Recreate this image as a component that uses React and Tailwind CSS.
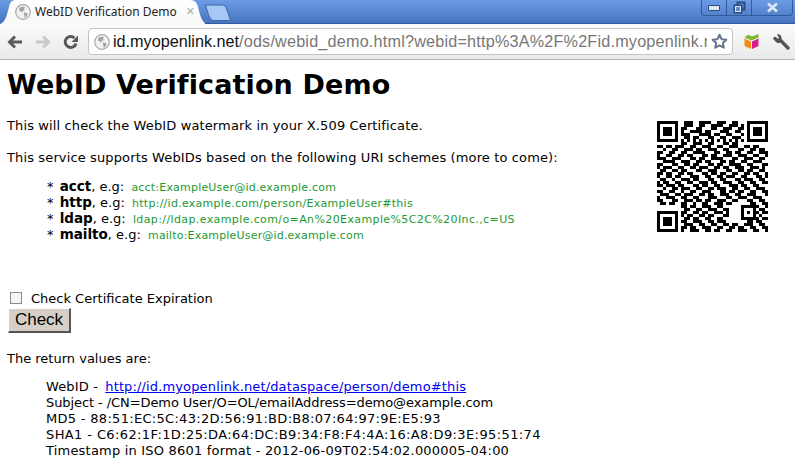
const QR = [
"0000000001110011110011100110001000000",
"0000000001110011001111001110110000000",
"0000000111000110001100111001100000000",
"0000000110011110110001110011000000000",
"0000000111100011110110011000110000000",
"0000000001101100011001100111010000000",
"0000000010101010101010101010100000000",
"0000000011001110011000110110000000000",
"1101101110011001110011001110011011000",
"0010011001110110011100110001100110110",
"1100110011001111000110011011001100111",
"1001100110110001101100111001110011001",
"1110011100011011001111000110011100110",
"0011110011100110110001101100110011100",
"1100011001101100011011001111001100011",
"1011100110011011100110110011100111010",
"0110011011000110011100011001101100110",
"1101100110110001101101100110011011001",
"1001101100011100110011011100110001101",
"0110010011101100011001100011011100110",
"1011001100110011101100111001100110011",
"1101110110001101100110001110110011000",
"0010011011100110011011100110011001110",
"1100110010011001110001101101100110011",
"0111001101110011011001110011001110001",
"1001110011001100011100011001110011100",
"1100011001110110110011100110001100110",
"0110110011001001100111011000000110011",
"0000000011011001110011000000000011001",
"0000000001100110011100110000000100110",
"0000000011001101100111010000000011011",
"0000000010110011011000110000000100100",
"0000000001101100110011000000000011011",
"0000000011001110011011100000001101100",
"0000000001110011001100110110011100110",
"0000000011011001110011001101100110011",
"0000000010011100110110011001110011001",
];
function qrCells() {
  const g = QR.map((r) => r.padEnd(37, "0").split("").map(Number));
  const finder = (x, y) => {
    for (let i = -1; i < 8; i++) for (let j = -1; j < 8; j++) {
      const cx = x + j, cy = y + i;
      if (cx < 0 || cy < 0 || cx > 36 || cy > 36) continue;
      const edge = i === 0 || i === 6 || j === 0 || j === 6;
      const core = i >= 2 && i <= 4 && j >= 2 && j <= 4;
      const inside = i >= 0 && i <= 6 && j >= 0 && j <= 6;
      g[cy][cx] = inside && (edge || core) ? 1 : 0;
    }
  };
  finder(0, 0); finder(30, 0); finder(0, 30);
  for (let i = -2; i <= 2; i++) for (let j = -2; j <= 2; j++) {
    g[30 + i][30 + j] = Math.max(Math.abs(i), Math.abs(j)) !== 1 ? 1 : 0;
  }
  return g;
}
function QrCode() {
  const g = qrCells();
  let d = "";
  g.forEach((r, y) => r.forEach((v, x) => { if (v) d += `M${x} ${y}h1v1h-1z`; }));
  return (
    <svg width="111" height="111" viewBox="0 0 37 37" shapeRendering="crispEdges" className="block">
      <path d={d} fill="#000" />
    </svg>
  );
}
function Globe({ size = 16 }) {
  return (
    <svg width={size} height={size} viewBox="0 0 16 16" className="shrink-0">
      <circle cx="8" cy="8" r="7.3" fill="#f2f2f2" stroke="#a8a8a8" strokeWidth="1.2" />
      <path d="M4.5 3.5 8 2.6l2 1-1 1.4.8 1.2-2 .6-.6 1.7-1.7-1.2L4 6.3zM8.8 8.6l3 .4.9 1.5-1.6 2.6-1.4.6-.4-2.4z" fill="#a4a4a4" />
    </svg>
  );
}
const items = [
  ["acct", "acct:ExampleUser@id.example.com", "tracking-[0.2px]"],
  ["http", "http://id.example.com/person/ExampleUser#this", "tracking-[0.27px]"],
  ["ldap", "ldap://ldap.example.com/o=An%20Example%5C2C%20Inc.,c=US", "tracking-[0.39px]"],
  ["mailto", "mailto:ExampleUser@id.example.com", "tracking-[0.18px]"],
];
export default function App() {
  return (
    <div className="relative w-[795px] h-[470px] overflow-hidden bg-white text-black font-['DejaVu_Sans',sans-serif]">
      {/* title bar */}
      <div className="h-6 flex items-start bg-gradient-to-b from-[#6c9ce4] to-[#4773c0] border-b border-[#2f5a9c]">
        <div className="relative w-[205px] h-6 shrink-0">
          <svg width="205" height="24" viewBox="0 0 205 24" className="absolute left-0 top-0">
            <defs>
              <linearGradient id="tabg" x1="0" y1="0" x2="0" y2="1">
                <stop offset="0" stopColor="#ffffff" />
                <stop offset="1" stopColor="#f8f8f8" />
              </linearGradient>
            </defs>
            <path d="M0 24C6 22 7 14 9 7 10 2 12 0 16 0H190C195 0 197 3 198 7 200 14 201 22 207 24Z" fill="url(#tabg)" />
          </svg>
          <div className="relative flex items-center h-6 pl-[15px]">
            <Globe size={16} />
            <span className="ml-[4px] text-[12px] leading-6 font-['Noto_Sans',sans-serif] text-[#222] whitespace-nowrap">WebID Verification Demo</span>
            <span className="ml-[9px] text-[11px] text-[#aaa] leading-6">✕</span>
          </div>
        </div>
        <svg width="28" height="20" viewBox="0 0 28 20" className="shrink-0 mt-[4px]">
          <path d="M1 1H17C20 1 21 3 22 6L25 15C25.5 16 24 16.5 23 16.5H9C6 16.5 5 14 4 12L1 3Z" fill="#a5c8f4" stroke="#3e67a8" />
        </svg>
        <div className="ml-auto mr-[2px] flex w-[92px] h-[16px] rounded-b-[4px] border border-t-0 border-[#2f5a9c]">
          <div className="w-[25px] flex items-center justify-center border-r border-[#2f5a9c]">
            <div className="w-[12px] h-[6px] rounded-[1px] bg-[#dfe7f5] border border-[#2b4a80]" />
          </div>
          <div className="w-[25px] flex items-center justify-center border-r border-[#2f5a9c]">
            <svg width="13" height="13" viewBox="0 0 13 13">
              <rect x="4.5" y="1.5" width="7" height="7" fill="none" stroke="#2b4a80" strokeWidth="2" />
              <rect x="1.5" y="4.5" width="7" height="7" fill="#5f8ad6" stroke="#2b4a80" strokeWidth="2" />
              <rect x="2.5" y="5.5" width="5" height="5" fill="none" stroke="#dfe7f5" />
            </svg>
          </div>
          <div className="flex-1 flex items-center justify-center">
            <svg width="13" height="11" viewBox="0 0 13 11">
              <path d="M2 1.5 11 9.5M11 1.5 2 9.5" stroke="#dfe7f5" strokeWidth="2.6" />
            </svg>
          </div>
        </div>
      </div>
      {/* toolbar */}
      <div className="h-[36px] flex items-center bg-gradient-to-b from-[#fbfbfb] to-[#e9e9e9] border-b border-[#b4b4b4]">
        <svg width="16" height="14" viewBox="0 0 16 14" className="ml-[7px] shrink-0">
          <path d="M8 1.5 2.5 7 8 12.5M3 7H15" fill="none" stroke="#5a5a5a" strokeWidth="3" />
        </svg>
        <svg width="16" height="14" viewBox="0 0 16 14" className="ml-[12px] shrink-0">
          <path d="M8 1.5 13.5 7 8 12.5M13 7H1" fill="none" stroke="#c9c9c9" strokeWidth="3" />
        </svg>
        <svg width="16" height="16" viewBox="0 0 16 16" className="ml-[12px] shrink-0">
          <path d="M13 9.5A5.5 5.5 0 1 1 11.5 4" fill="none" stroke="#585858" strokeWidth="3" />
          <path d="M15 1.5V8H8.5Z" fill="#585858" />
        </svg>
        <div className="ml-[9px] w-[645px] shrink-0 h-[27px] flex items-center bg-white border border-[#c4c4c4] rounded-[4px] pl-[5px] pr-[4px]">
          <Globe size={16} />
          <div className="ml-[3px] w-[594px] overflow-hidden whitespace-nowrap text-[16.2px] leading-[25px] font-['Liberation_Sans',sans-serif]">
            <span className="text-[#111]">id.myopenlink.net</span>
            <span className="text-[#777] tracking-[0.2px]">/ods/webid_demo.html?webid=http%3A%2F%2Fid.myopenlink.net</span>
          </div>
          <svg width="17" height="17" viewBox="0 0 24 24" className="ml-auto shrink-0">
            <path d="M12 2.5l2.9 6.2 6.8.8-5 4.6 1.3 6.7-6-3.4-6 3.4 1.3-6.7-5-4.6 6.8-.8z" fill="#fff" stroke="#66748c" strokeWidth="2.8" strokeLinejoin="round" />
          </svg>
        </div>
        <svg width="17" height="17" viewBox="0 0 17 17" className="ml-[10px] shrink-0">
          <path d="M1.5 5.5 8 8.5V16L1.5 13Z" fill="#f28c14" />
          <path d="M15.5 5.5 9 8.5V16L15.5 13Z" fill="#d81e8a" />
          <path d="M1.5 4.5 8.5 7.5 15.5 4.5 15.5 1 9 3.5 5 1.8Z" fill="#7cb82a" />
        </svg>
        <svg width="18" height="18" viewBox="0 0 18 18" className="ml-[13px] shrink-0">
          <path d="M2 5.5 5 8.5 8 7.8 15 15" fill="none" stroke="#555" strokeWidth="3.4" strokeLinecap="round" />
          <path d="M1 4.5 3.8 6.8 6 5 4 1.5C7 .4 9 3 8.6 6.5L6 8.8C3 9.5.8 7.5 1 4.5Z" fill="#555" />
        </svg>
      </div>
      {/* content */}
      <div className="relative pl-[7px] pt-[7px]">
        <h1 className="text-[27px] tracking-[0.12px] leading-[36px] font-bold">WebID Verification Demo</h1>
        <div className="absolute left-[657px] top-[61px]">
          <QrCode />
        </div>
        <p className="mt-[15px] text-[13px] tracking-[0.13px] leading-[16px]">This will check the WebID watermark in your X.509 Certificate.</p>
        <p className="mt-[16px] text-[13px] tracking-[0.13px] leading-[16px]">This service supports WebIDs based on the following URI schemes (more to come):</p>
        <ul className="mt-[13px] pl-[40px] text-[13px] leading-[16px]">
          {items.map(([k, v, t]) => (
            <li key={k} className="whitespace-nowrap">
              *&nbsp;<b className="ml-[2px] text-[13.5px] leading-none">{k}</b>, e.g: <span className={`ml-[3px] text-[11px] leading-none text-[#1c9a32] ${t}`}>{v}</span>
            </li>
          ))}
        </ul>
        <label className="mt-[48px] flex items-center text-[13px] leading-[16px]">
          <span className="ml-[3px] w-[12px] h-[12px] -mt-[3px] border border-[#8c8c8c] bg-[#f4f4f4] shrink-0" />
          <span className="ml-[9px]">Check Certificate Expiration</span>
        </label>
        <button className="mt-[1px] ml-[1px] block w-[63px] h-[25px] bg-[#d4d0c8] border-t border-l border-t-white border-l-white border-r-2 border-b-2 border-r-[#555] border-b-[#555] text-[17px] leading-[20px] font-['Liberation_Sans',sans-serif]">Check</button>
        <p className="mt-[18px] text-[13px] leading-[16px]">The return values are:</p>
        <div className="mt-[12px] pl-[39px] text-[13px] leading-[16px] whitespace-nowrap">
          <div className="tracking-[0.14px]">WebID - <a href="#" className="ml-[3px] text-[#0000ee] underline">http://id.myopenlink.net/dataspace/person/demo#this</a></div>
          <div className="tracking-[-0.08px]">Subject - /CN=Demo User/O=OL/emailAddress=demo@example.com</div>
          <div className="tracking-[0.3px]">MD5 - 88:51:EC:5C:43:2D:56:91:BD:B8:07:64:97:9E:E5:93</div>
          <div className="tracking-[0.39px]">SHA1 - C6:62:1F:1D:25:DA:64:DC:B9:34:F8:F4:4A:16:A8:D9:3E:95:51:74</div>
          <div className="tracking-[0.2px]">Timestamp in ISO 8601 format - 2012-06-09T02:54:02.000005-04:00</div>
        </div>
      </div>
    </div>
  );
}
